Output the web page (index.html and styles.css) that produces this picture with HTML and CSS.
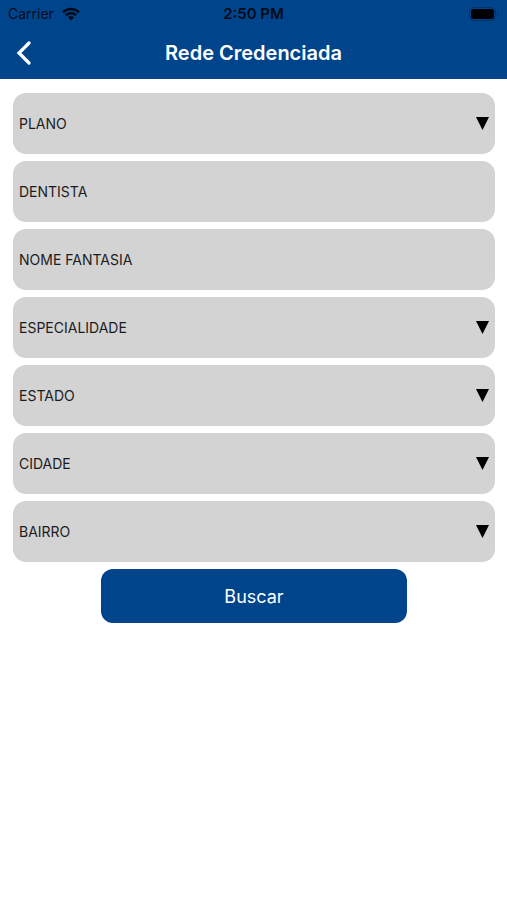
FILE: index.html
```html
<!DOCTYPE html>
<html lang="pt-BR">
<head>
    <meta charset="UTF-8">
    <meta name="viewport" content="width=device-width, initial-scale=1.0">
    <title>Rede Credenciada</title>
    <link rel="stylesheet" href="styles.css">
</head>
<body>
    <header class="header">
        <div class="status-bar">
            <div class="status-carrier">
                <span>Carrier</span>
                <svg class="wifi" viewBox="0 0 18 14" aria-hidden="true">
                    <path d="M1 5.300a11.500 11.500 0 0 1 16 0M3.800 8.400a7.500 7.500 0 0 1 10.400 0" fill="none" stroke="currentColor" stroke-width="2.400"/>
                    <path d="M5.900 10.500a4.500 4.500 0 0 1 6.200 0L9 13.600z" fill="currentColor"/>
                </svg>
            </div>
            <span class="status-time">2:50 PM</span>
            <svg class="battery" viewBox="0 0 30 14" aria-hidden="true">
                <rect x="0.5" y="0.5" width="26" height="13" rx="4" fill="none" stroke="#000" stroke-opacity="0.25"/>
                <rect x="2" y="2" width="23" height="10" rx="2.5" fill="#000"/>
                <path d="M28 5v4c1.2-.4 1.6-1.2 1.6-2S29.2 5.4 28 5z" fill="#000" fill-opacity="0.25"/>
            </svg>
        </div>
        <div class="nav-bar">
            <button class="back" type="button" aria-label="Voltar">
                <svg viewBox="0 0 16 24" aria-hidden="true">
                    <path d="M13 2 3 12l10 10" fill="none" stroke="#fff" stroke-width="3.2" stroke-linecap="round"/>
                </svg>
            </button>
            <h1 class="title">Rede Credenciada</h1>
        </div>
    </header>

    <form class="search-form">
        <div class="field">
            <label for="plano">PLANO</label>
            <select id="plano"><option value=""></option></select>
        </div>
        <div class="field">
            <label for="dentista">DENTISTA</label>
            <input id="dentista" type="text">
        </div>
        <div class="field">
            <label for="nome-fantasia">NOME FANTASIA</label>
            <input id="nome-fantasia" type="text">
        </div>
        <div class="field">
            <label for="especialidade">ESPECIALIDADE</label>
            <select id="especialidade"><option value=""></option></select>
        </div>
        <div class="field">
            <label for="estado">ESTADO</label>
            <select id="estado"><option value=""></option></select>
        </div>
        <div class="field">
            <label for="cidade">CIDADE</label>
            <select id="cidade"><option value=""></option></select>
        </div>
        <div class="field">
            <label for="bairro">BAIRRO</label>
            <select id="bairro"><option value=""></option></select>
        </div>
        <button class="submit" type="submit">Buscar</button>
    </form>
</body>
</html>
```

FILE: styles.css
```css
* { box-sizing: border-box; }
body { margin: 0; background: #fff; color: #1c1c1c; font-family: Inter, "Liberation Sans", sans-serif; font-size: 14px; }

.header { background: #00458c; }
.status-bar { display: grid; grid-template-columns: 1fr auto 1fr; align-items: center; height: 27px; padding: 0 8px; color: #000b1a; }
.status-carrier { display: flex; align-items: center; gap: 8px; }
.status-time { font-size: 15px; font-weight: 600; }
.wifi { width: 18px; height: 14px; }
.battery { justify-self: end; width: 30px; height: 14px; }

.nav-bar { display: grid; grid-template-columns: 48px 1fr 48px; align-items: center; height: 52px; }
.back { display: flex; align-items: center; height: 52px; padding: 0 16px; border: 0; background: none; cursor: pointer; }
.back svg { width: 16px; height: 24px; }
.title { margin: 0; color: #fff; font-size: 20px; font-weight: 600; text-align: center; }

.search-form { display: flex; flex-direction: column; gap: 7px; padding: 14px 12px 14px 13px; }
.field { display: flex; align-items: center; height: 61px; padding-left: 6px; border-radius: 13px; background: #d3d3d3; }
.field input,
.field select { flex: 1; min-width: 0; height: 100%; margin: 0; padding: 0 24px 0 8px; border: 0; background: none; color: inherit; font: inherit; outline: 0; }
.field select { appearance: none; background: url("data:image/svg+xml,%3Csvg xmlns='http://www.w3.org/2000/svg' width='13' height='13'%3E%3Cpath d='M0 0h13L6.5 13z'/%3E%3C/svg%3E") no-repeat right 6px center; }

.submit { align-self: center; width: 306px; max-width: 100%; height: 54px; border: 0; border-radius: 12px; background: #00458c; color: #fff; font: inherit; font-size: 18px; cursor: pointer; }
```
